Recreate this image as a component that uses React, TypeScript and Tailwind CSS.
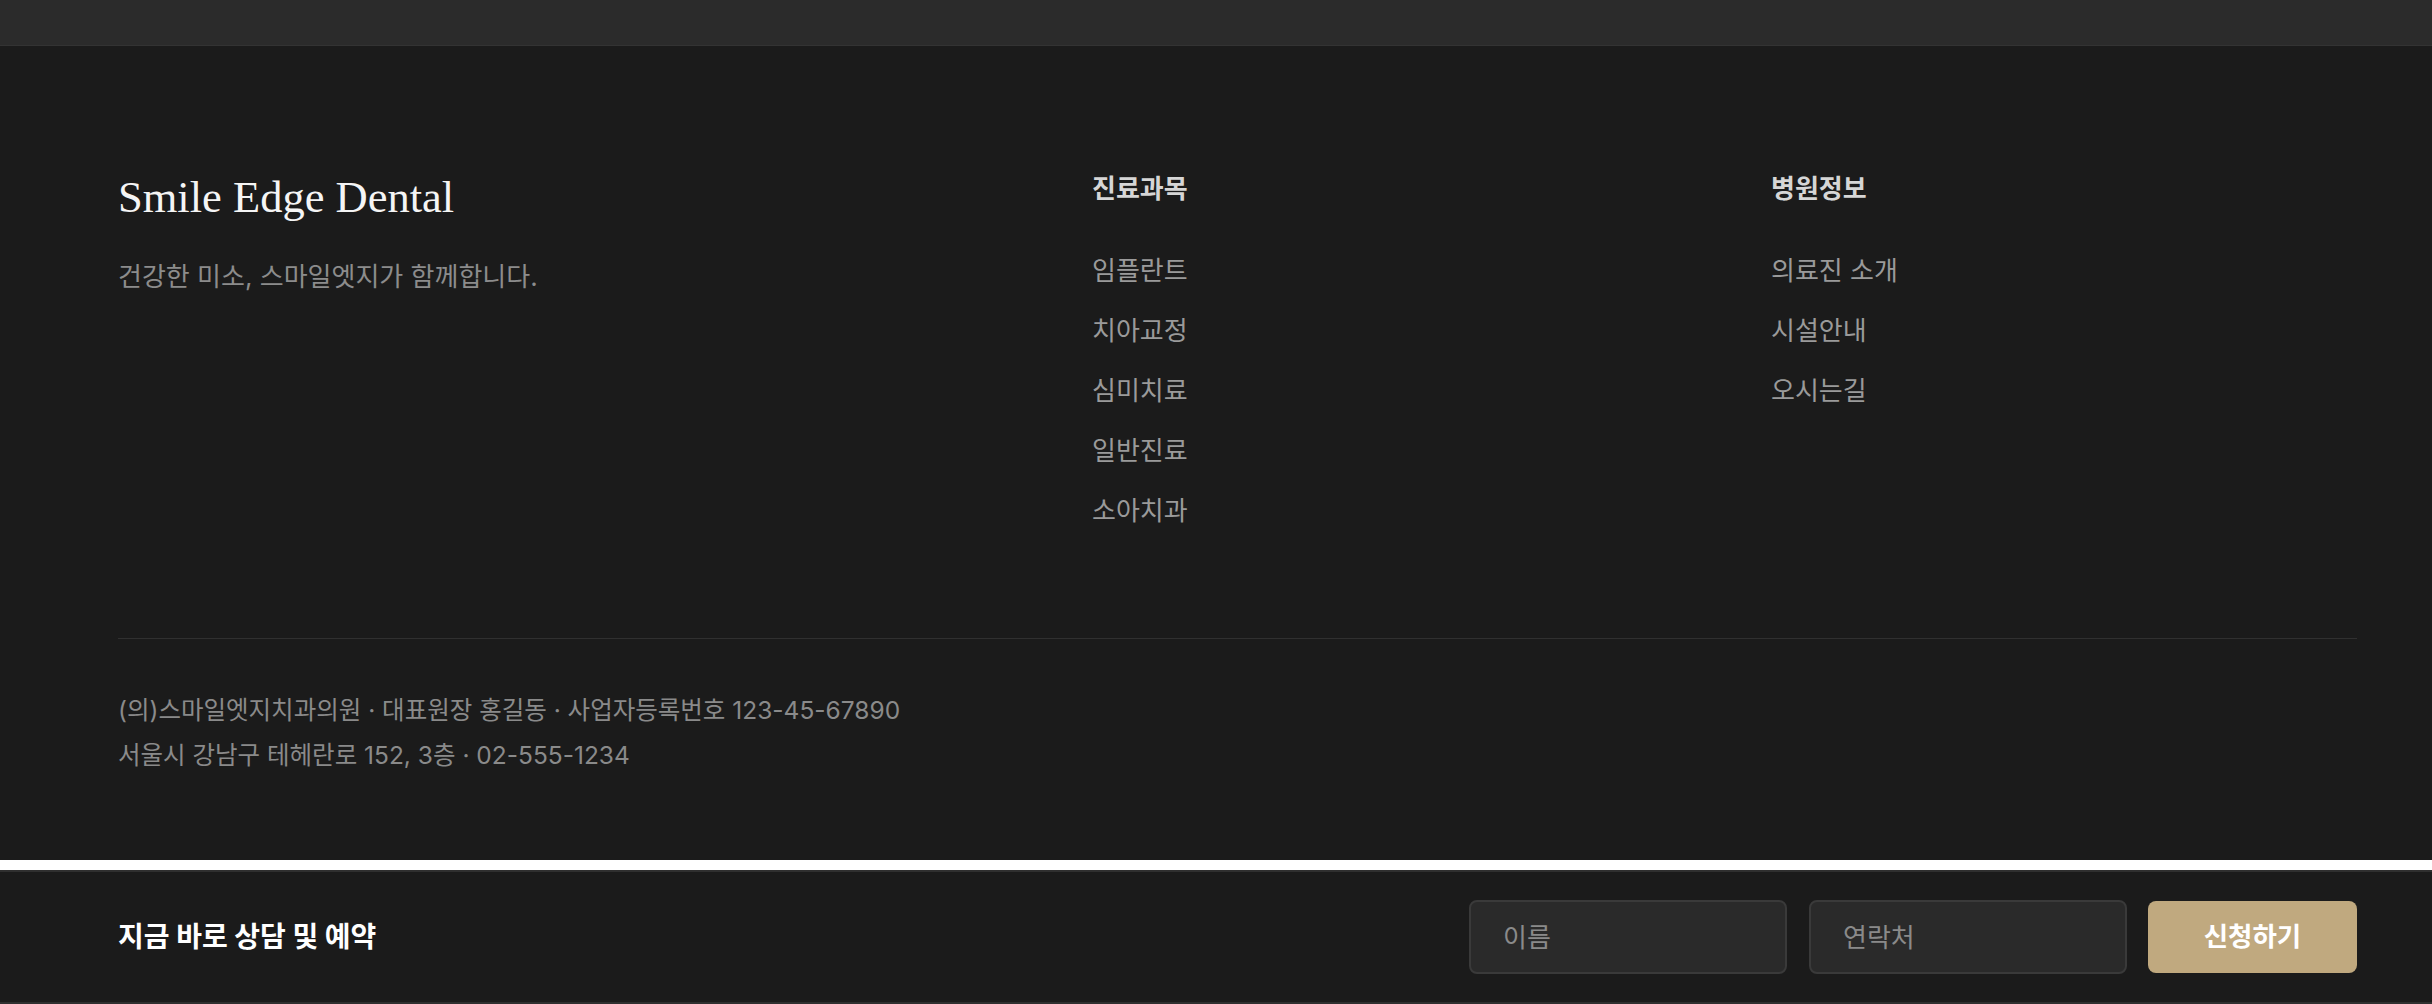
const treatments = ["임플란트", "치아교정", "심미치료", "일반진료", "소아치과"];
const clinicInfo = ["의료진 소개", "시설안내", "오시는길"];

const sans = "font-['Inter','Noto_Sans_CJK_KR',sans-serif]";

export default function App() {
  return (
    <div className={`w-full bg-white ${sans}`}>
      {/* tail of the previous section */}
      <div className="h-[46px] border-b border-[#333333] bg-[#2b2b2b]" />

      <footer className="h-[814px] bg-[#1b1b1b] pl-[118px] pr-[75px] pt-[125px]">
        <div className="grid grid-cols-[974px_679px_1fr]">
          <div>
            <h2 className="font-['Liberation_Serif',serif] text-[44.5px] leading-[52px] text-[#f5f5f5]">
              Smile Edge Dental
            </h2>
            <p className="mt-[36px] text-[26px] leading-[36px] text-[#8c8c8c]">
              건강한 미소, 스마일엣지가 함께합니다.
            </p>
          </div>

          <div>
            <h3 className="text-[26px] font-bold leading-[36px] text-[#d6d6d6]">진료과목</h3>
            <ul className="mt-[46px] flex flex-col gap-[24px]">
              {treatments.map((t) => (
                <li key={t} className="text-[26px] leading-[36px] text-[#9a9a9a]">
                  {t}
                </li>
              ))}
            </ul>
          </div>

          <div>
            <h3 className="text-[26px] font-bold leading-[36px] text-[#d6d6d6]">병원정보</h3>
            <ul className="mt-[46px] flex flex-col gap-[24px]">
              {clinicInfo.map((t) => (
                <li key={t} className="text-[26px] leading-[36px] text-[#9a9a9a]">
                  {t}
                </li>
              ))}
            </ul>
          </div>
        </div>

        <div className="mt-[109px] border-t border-[#303030] pt-[49px] text-[24.5px] leading-[45px] text-[#8a8a8a]">
          <p>(의)스마일엣지치과의원 · 대표원장 홍길동 · 사업자등록번호 123-45-67890</p>
          <p>서울시 강남구 테헤란로 152, 3층 · 02-555-1234</p>
        </div>
      </footer>

      <div className="h-[10px] bg-white" />

      <div className="flex h-[134px] items-center justify-between border-y-2 border-[#2f2f2f] bg-[#1b1b1b] pl-[118px] pr-[75px]">
        <p className="text-[28px] font-bold text-white">지금 바로 상담 및 예약</p>
        <div className="flex items-center">
          <input
            placeholder="이름"
            className="h-[74px] w-[318px] rounded-[8px] border-2 border-[#3a3a3a] bg-[#2a2a2a] px-[32px] text-[26px] text-white outline-none placeholder:text-[#8a8a8a]"
          />
          <input
            placeholder="연락처"
            className="ml-[22px] h-[74px] w-[318px] rounded-[8px] border-2 border-[#3a3a3a] bg-[#2a2a2a] px-[32px] text-[26px] text-white outline-none placeholder:text-[#8a8a8a]"
          />
          <button className="ml-[21px] h-[72px] w-[209px] rounded-[8px] bg-[#c0a97f] text-[26.5px] font-bold text-white">
            신청하기
          </button>
        </div>
      </div>
    </div>
  );
}
